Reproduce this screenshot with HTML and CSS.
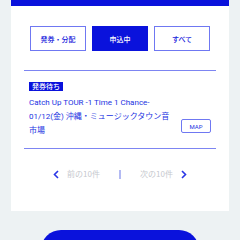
FILE: index.html
```html
<!DOCTYPE html>
<html lang="ja">
<head>
<meta charset="utf-8">
<link rel="stylesheet" href="styles.css">
</head>
<body>
<div class="page">
  <div class="topbar"></div>
  <div class="card">
    <div class="tabs">
      <button class="tab">発券・分配</button>
      <button class="tab active">申込中</button>
      <button class="tab">すべて</button>
    </div>
    <div class="list">
      <div class="item">
        <span class="badge">発券待ち</span>
        <p class="title">Catch Up TOUR -1 Time 1 Chance-</p>
        <div class="row">
          <p class="venue">01/12(金) 沖縄・ミュージックタウン音市場</p>
          <a class="map">MAP</a>
        </div>
      </div>
    </div>
    <nav class="pager">
      <span class="pg prev">
        <svg class="chev" width="6" height="9" viewBox="0 0 6 9"><polyline points="5,1 1.5,4.5 5,8" fill="none" stroke="#2a36e6" stroke-width="1.6"/></svg>
        <span class="pg-text">前の10件</span>
      </span>
      <span class="sep"></span>
      <span class="pg next">
        <span class="pg-text">次の10件</span>
        <svg class="chev" width="6" height="9" viewBox="0 0 6 9"><polyline points="1,1 4.5,4.5 1,8" fill="none" stroke="#2a36e6" stroke-width="1.6"/></svg>
      </span>
    </nav>
  </div>
  <div class="cta"></div>
</div>
</body>
</html>
```

FILE: styles.css
```css
html, body {
  margin: 0;
  padding: 0;
  background: #edf2f3;
}
body {
  font-family: "Roboto", "Noto Sans CJK JP", sans-serif;
  color: #0d18dc;
}
.page {
  width: 218px;
  margin: 0 auto;
  display: flex;
  flex-direction: column;
}
.topbar {
  height: 6px;
  background: #0a12dc;
}
.card {
  background: #ffffff;
  padding: 20px 13px 31px;
}
.tabs {
  display: flex;
  gap: 6px;
  padding: 0 6px;
  margin-bottom: 19px;
}
.tab {
  flex: 1;
  height: 25px;
  margin: 0;
  padding: 0;
  border: 1px solid #6f78f2;
  background: #ffffff;
  color: #1520dc;
  font-family: "Noto Sans CJK JP", sans-serif;
  font-size: 7px;
  font-weight: 500;
}
.tab.active {
  background: #0a12dc;
  border-color: #0a12dc;
  color: #ffffff;
}
.list {
  border-top: 1px solid #7d85f2;
  border-bottom: 1px solid #7d85f2;
}
.item {
  padding: 11px 5px 10px;
  display: flex;
  flex-direction: column;
  align-items: flex-start;
}
.badge {
  display: block;
  height: 9px;
  line-height: 9px;
  padding: 0 3px;
  background: #0a12dc;
  color: #ffffff;
  font-family: "Noto Sans CJK JP", sans-serif;
  font-size: 7px;
  font-weight: 500;
  margin-bottom: 5px;
}
.title, .venue {
  margin: 0;
  font-size: 8px;
  line-height: 14px;
  color: #2233e2;
}
.row {
  align-self: stretch;
  display: flex;
  align-items: center;
  gap: 4px;
}
.venue {
  flex: 1;
}
.map {
  width: 30px;
  height: 14px;
  box-sizing: border-box;
  border: 1px solid #6f78f2;
  border-radius: 2px;
  display: flex;
  align-items: center;
  justify-content: center;
  font-size: 6px;
  color: #2233e2;
  margin-top: 4px;
}
.pager {
  margin-top: 19px;
  height: 12px;
  display: flex;
  justify-content: center;
  align-items: center;
  gap: 19px;
}
.pg {
  display: flex;
  align-items: center;
  gap: 8px;
}
.pg-text {
  font-family: "Noto Sans CJK JP", sans-serif;
  font-size: 8px;
  color: #c6c8ce;
  line-height: 12px;
}
.chev {
  display: block;
}
.sep {
  width: 2px;
  height: 9px;
  background: #b3baf3;
}
.cta {
  margin: 19px auto 0;
  width: 158px;
  height: 40px;
  border-radius: 20px;
  background: #0a12dc;
}
```
